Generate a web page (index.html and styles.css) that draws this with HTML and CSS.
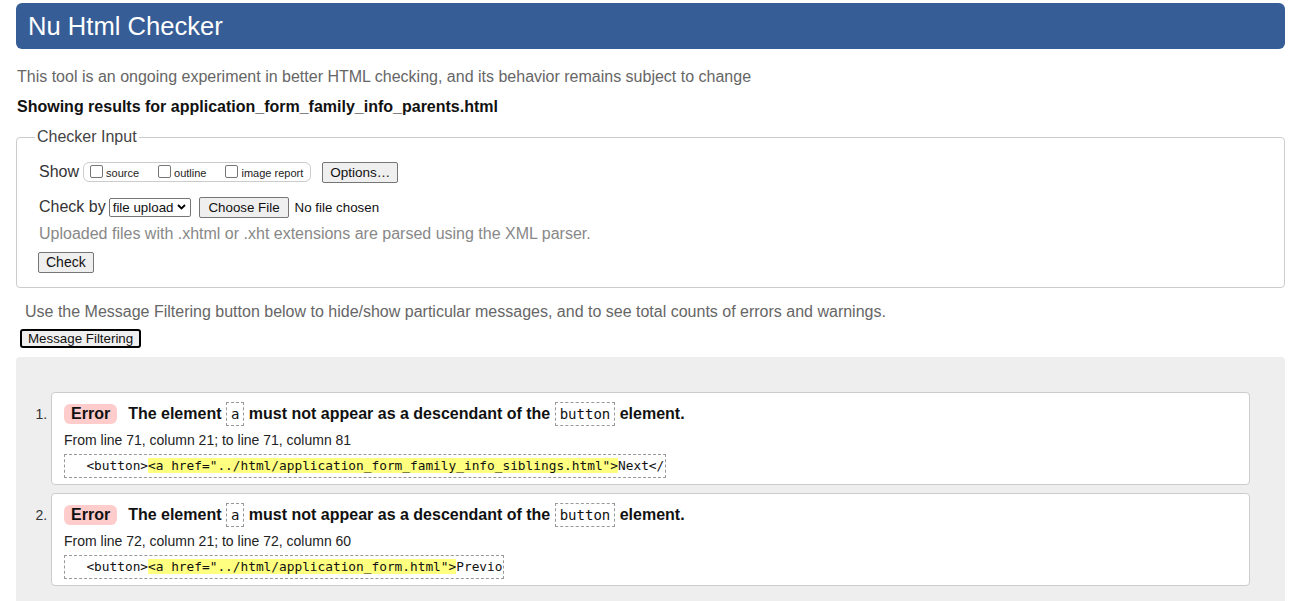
FILE: index.html
```html
<!DOCTYPE html>
<html lang="en">
<head>
<meta charset="utf-8">
<title>Nu Html Checker</title>
<link rel="stylesheet" href="styles.css">
</head>
<body>
<h1 class="title">Nu Html Checker</h1>
<p class="intro">This tool is an ongoing experiment in better HTML checking, and its behavior remains subject to change</p>
<p class="showing">Showing results for application_form_family_info_parents.html</p>

<fieldset class="input">
  <legend class="legend">Checker Input</legend>
  <div class="row show-row">
    <span class="lbl">Show</span>
    <span class="opts">
      <label class="opt"><span class="cb"></span>source</label>
      <label class="opt"><span class="cb"></span>outline</label>
      <label class="opt"><span class="cb"></span>image report</label>
    </span>
    <span class="btn btn-options">Options…</span>
  </div>
  <div class="row by-row">
    <span class="lbl">Check by</span>
    <span class="select">file upload
      <svg class="chev" width="9" height="6" viewBox="0 0 9 6"><path d="M1 1 L4.5 4.5 L8 1" fill="none" stroke="#000" stroke-width="1.8"/></svg>
    </span>
    <span class="btn btn-file">Choose File</span>
    <span class="nofile">No file chosen</span>
  </div>
  <p class="hint">Uploaded files with .xhtml or .xht extensions are parsed using the XML parser.</p>
  <span class="btn btn-check">Check</span>
</fieldset>

<p class="filter-note">Use the Message Filtering button below to hide/show particular messages, and to see total counts of errors and warnings.</p>
<span class="btn-filter">Message Filtering</span>

<div class="results">
  <ol class="msgs">
    <li class="msg">
      <p class="msg-line"><strong class="badge">Error</strong><span class="msg-text">The element <code class="tag">a</code> must not appear as a descendant of the <code class="tag">button</code> element.</span></p>
      <p class="loc">From line 71, column 21; to line 71, column 81</p>
      <p class="extract"><code>  &lt;button&gt;<b class="hl">&lt;a href="../html/application_form_family_info_siblings.html"&gt;</b>Next&lt;/</code></p>
    </li>
    <li class="msg">
      <p class="msg-line"><strong class="badge">Error</strong><span class="msg-text">The element <code class="tag">a</code> must not appear as a descendant of the <code class="tag">button</code> element.</span></p>
      <p class="loc">From line 72, column 21; to line 72, column 60</p>
      <p class="extract"><code>  &lt;button&gt;<b class="hl">&lt;a href="../html/application_form.html"&gt;</b>Previo</code></p>
    </li>
  </ol>
</div>
</body>
</html>
```

FILE: styles.css
```css
html, body {
  margin: 0;
  background: #fff;
}
body {
  padding: 3px 5px 0 16px;
  font-family: "Liberation Sans", Arial, sans-serif;
  font-size: 16px;
  color: #111;
  overflow: hidden;
}
p { margin: 0; }

.title {
  margin: 0;
  height: 46px;
  line-height: 46px;
  padding-left: 12px;
  background: #365d95;
  color: #fff;
  font-weight: normal;
  font-size: 25.6px;
  border-radius: 6px;
}

.intro {
  margin-top: 19px;
  color: #666;
  line-height: 18px;
  padding-left: 1px;
}
.showing {
  margin-top: 12px;
  font-weight: bold;
  line-height: 18px;
  padding-left: 1px;
}

.input {
  margin: 12px 0 0 0;
  border: 1px solid #ccc;
  border-radius: 4px;
  padding: 15px 22px 14px 22px;
  min-width: 0;
}
.legend {
  padding: 0 2px;
  margin-left: -4px;
  color: #444;
  line-height: 18px;
}

.row {
  display: flex;
  align-items: center;
  height: 22px;
}
.lbl {
  color: #333;
  margin-right: 4px;
}
.opts {
  display: inline-flex;
  align-items: center;
  height: 18px;
  border: 1px solid #ccc;
  border-radius: 6px;
  padding: 0 7px 0 6px;
  gap: 19px;
}
.opt {
  display: inline-flex;
  align-items: center;
  font-size: 11px;
  color: #222;
  padding-top: 2px;
}
.cb {
  display: inline-block;
  width: 11px;
  height: 11px;
  border: 1px solid #767676;
  border-radius: 2px;
  margin-right: 3px;
  margin-top: -4px;
  background: #fff;
}
.btn {
  display: inline-block;
  background: #efefef;
  border: 1px solid #767676;
  border-radius: 2px;
  font-size: 13.5px;
  color: #111;
  line-height: 17px;
  padding: 1px 8px;
}
.btn-options { margin-left: 11px; padding: 1px 7px; }

.by-row { margin-top: 13px; }
.select {
  display: inline-flex;
  align-items: center;
  gap: 4px;
  border: 1px solid #767676;
  border-radius: 2px;
  font-size: 13.33px;
  line-height: 17px;
  padding: 0 4px 0 3px;
  margin-left: -1px;
  background: #fff;
}
.btn-file { margin-left: 8px; padding: 1px 8px; font-size: 13.33px; }
.nofile { font-size: 13.33px; margin-left: 6px; color: #111; }

.hint {
  margin-top: 7px;
  color: #888;
  line-height: 18px;
}
.btn-check {
  margin-top: 9px;
  padding: 1px 7px;
  margin-left: -1px;
  font-size: 14px;
}

.filter-note {
  margin-top: 15px;
  padding-left: 9px;
  color: #666;
  line-height: 18px;
}
.btn-filter {
  display: inline-block;
  margin: 8px 0 0 4px;
  border: 2px solid #000;
  border-radius: 3px;
  background: #efefef;
  font-size: 13.33px;
  line-height: 15px;
  padding: 0 6px;
}

.results {
  margin-top: 9px;
  background: #eee;
  border-radius: 4px;
  padding: 35px 35px 20px 0;
  height: 300px;
}
.msgs {
  margin: 0;
  padding-left: 35px;
  list-style: decimal;
}
.msg {
  background: #fff;
  border: 1px solid #ccc;
  border-radius: 4px;
  padding: 9px 12px 6px 12px;
  margin-bottom: 8px;
  font-size: 14px;
}
.msg::marker {
  font-size: 14px;
  color: #333;
}
.msg-line {
  display: flex;
  align-items: center;
  font-size: 16px;
  line-height: 24px;
}
.badge {
  display: inline-block;
  background: #fcc;
  border-radius: 6px;
  padding: 0 7px;
  line-height: 20px;
  margin-right: 11px;
}
.msg-text { font-weight: bold; }
.tag {
  font-family: "DejaVu Sans Mono", monospace;
  font-weight: normal;
  font-size: 14px;
  border: 1px dashed #999;
  padding: 3px 4px;
  line-height: 24px;
}
.loc {
  margin-top: 5px;
  line-height: 18px;
  color: #222;
}
.extract {
  margin-top: 5px;
  display: inline-block;
  border: 1px dashed #999;
  padding: 2px 1px 2px 6px;
}
.extract code {
  font-family: "DejaVu Sans Mono", monospace;
  font-size: 12.8px;
  line-height: 18px;
  white-space: pre;
}
.hl {
  font-weight: normal;
  background: #ffff80;
}
```
